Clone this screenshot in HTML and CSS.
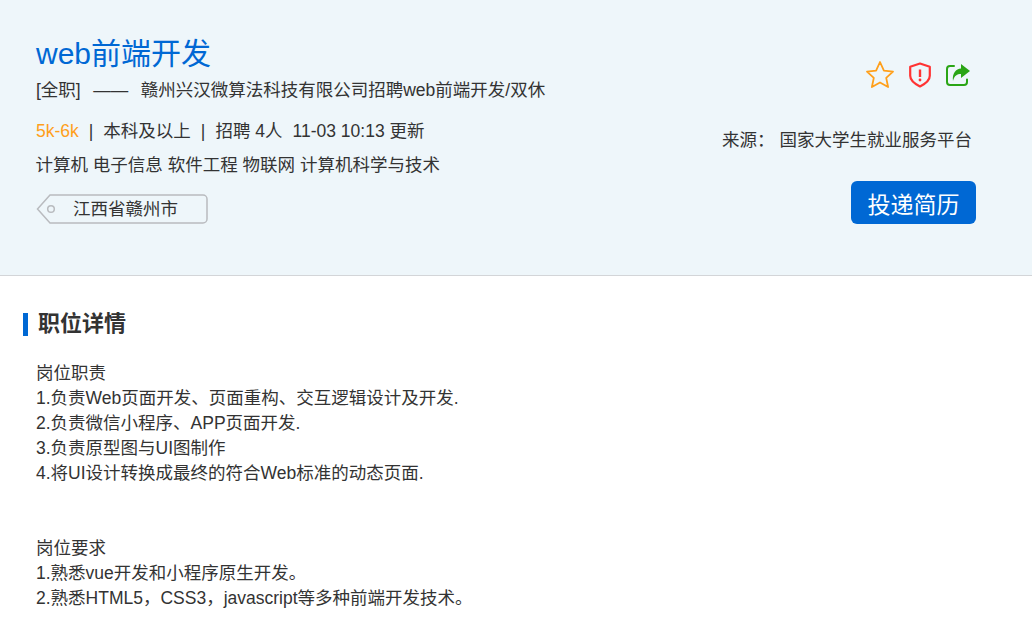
FILE: index.html
```html
<!DOCTYPE html>
<html lang="zh-CN">
<head>
<meta charset="utf-8">
<title>web前端开发</title>
<link rel="stylesheet" href="styles.css">
</head>
<body>
<header class="job-head">
  <div class="job-main">
    <h1 class="job-title">web前端开发</h1>
    <p class="job-company"><span>[全职]</span><span>——</span><span>赣州兴汉微算法科技有限公司招聘web前端开发/双休</span></p>
    <p class="job-meta"><span class="salary">5k-6k</span><span>|</span><span>本科及以上</span><span>|</span><span>招聘 4人</span><span>11-03 10:13 更新</span></p>
    <p class="job-majors">计算机 电子信息 软件工程 物联网 计算机科学与技术</p>
    <div class="tag">
      <svg class="tag-bg" viewBox="0 0 172 30" width="172" height="30" aria-hidden="true"><path d="M14 1H167a4 4 0 0 1 4 4V25a4 4 0 0 1-4 4H14L1.500 15Z" fill="none" stroke="#b9bbbf" stroke-width="1.500"/><circle cx="15" cy="15" r="3.300" fill="none" stroke="#b9bbbf" stroke-width="1.500"/></svg>
      <span class="tag-text">江西省赣州市</span>
    </div>
  </div>
  <div class="job-side">
    <div class="actions">
      <svg viewBox="0 0 30 30" width="30" height="30" aria-hidden="true"><path d="M15 2l3.900 8.600 9.100 1.100-6.800 6.200 1.900 9.100L15 22.500 6.900 27l1.900-9.100L2 11.700l9.100-1.100Z" fill="none" stroke="#ff9f1a" stroke-width="1.800" stroke-linejoin="round"/></svg>
      <svg viewBox="0 0 24 26" width="24" height="26" aria-hidden="true"><path d="M12 1.500l9.800 3.300v9c0 4.800-4.800 8.200-9.800 10.700-5-2.500-9.800-5.900-9.800-10.700v-9Z" fill="none" stroke="#ff3333" stroke-width="2.200" stroke-linejoin="round"/><path d="M12 7.500v7.500" stroke="#ff3333" stroke-width="2.400"/><circle cx="12" cy="18" r="1.400" fill="#ff3333"/></svg>
      <svg viewBox="0 0 26 24" width="26" height="24" aria-hidden="true"><path d="M9 3H5a3 3 0 0 0-3 3v13a3 3 0 0 0 3 3h14a3 3 0 0 0 3-3v-2.500" fill="none" stroke="#2aa515" stroke-width="2" stroke-linecap="round"/><path d="M16 1l9 7-9 7v-4c-4 0-6.500 1.500-8 7-1-8 3-12 8-12.500Z" fill="#2aa515"/></svg>
    </div>
    <p class="source"><span>来源：</span><span>国家大学生就业服务平台</span></p>
    <button class="apply" type="button">投递简历</button>
  </div>
</header>
<main class="detail">
  <h2 class="detail-title">职位详情</h2>
  <div class="detail-body">
    <p>岗位职责</p>
    <p>1.负责Web页面开发、页面重构、交互逻辑设计及开发.</p>
    <p>2.负责微信小程序、APP页面开发.</p>
    <p>3.负责原型图与UI图制作</p>
    <p>4.将UI设计转换成最终的符合Web标准的动态页面.</p>
    <p class="blank">&nbsp;</p>
    <p class="blank">&nbsp;</p>
    <p>岗位要求</p>
    <p>1.熟悉vue开发和小程序原生开发。</p>
    <p>2.熟悉HTML5，CSS3，javascript等多种前端开发技术。</p>
  </div>
</main>
</body>
</html>
```
FILE: styles.css
```css
* { box-sizing: border-box; }
html, body { margin: 0; padding: 0; height: 100%; overflow: hidden; }
body {
  background: #fff;
  color: #333;
  font-family: "Liberation Sans", "Noto Sans CJK SC", sans-serif;
  font-size: 17.5px;
}
p, h1, h2 { margin: 0; font-weight: normal; }

.job-head {
  height: 276px;
  background: #eef6fa;
  border-bottom: 1px solid #d3d5d8;
  padding: 33px 56px 0 36px;
  display: flex;
  justify-content: space-between;
}
.job-title { font-size: 30px; line-height: 42px; color: #0068d4; }
.job-company { display: flex; gap: 12.5px; line-height: 30px; }
.job-meta { display: flex; gap: 10px; line-height: 30px; margin-top: 11px; }
.salary { color: #ff9f1a; }
.job-majors { line-height: 30px; margin-top: 4px; margin-left: -0.5px; }

.tag { position: relative; width: 172px; height: 30px; margin-top: 14px; display: flex; align-items: center; }
.tag-bg { position: absolute; left: 0; top: 0; }
.tag-text { position: relative; margin-left: 37px; line-height: 30px; }

.job-side { display: flex; flex-direction: column; align-items: flex-end; }
.actions { display: flex; align-items: center; gap: 13px; margin-top: 27px; margin-right: 5px; height: 30px; }
.source { display: flex; gap: 5px; line-height: 30px; margin-top: 35px; margin-right: 4px; }
.apply {
  width: 125px;
  height: 43px;
  margin-top: 26px;
  border: 0;
  border-radius: 6px;
  background: #0068d4;
  color: #fff;
  font: inherit;
  font-size: 23px;
  padding: 0;
}

.detail { padding: 37px 0 0 23px; }
.detail-title {
  border-left: 5px solid #0068d4;
  padding-left: 10px;
  height: 23px;
  font-size: 22px;
  font-weight: bold;
  line-height: 21px;
  color: #333;
}
.detail-body { margin-top: 25px; padding-left: 13px; line-height: 25px; }
```
